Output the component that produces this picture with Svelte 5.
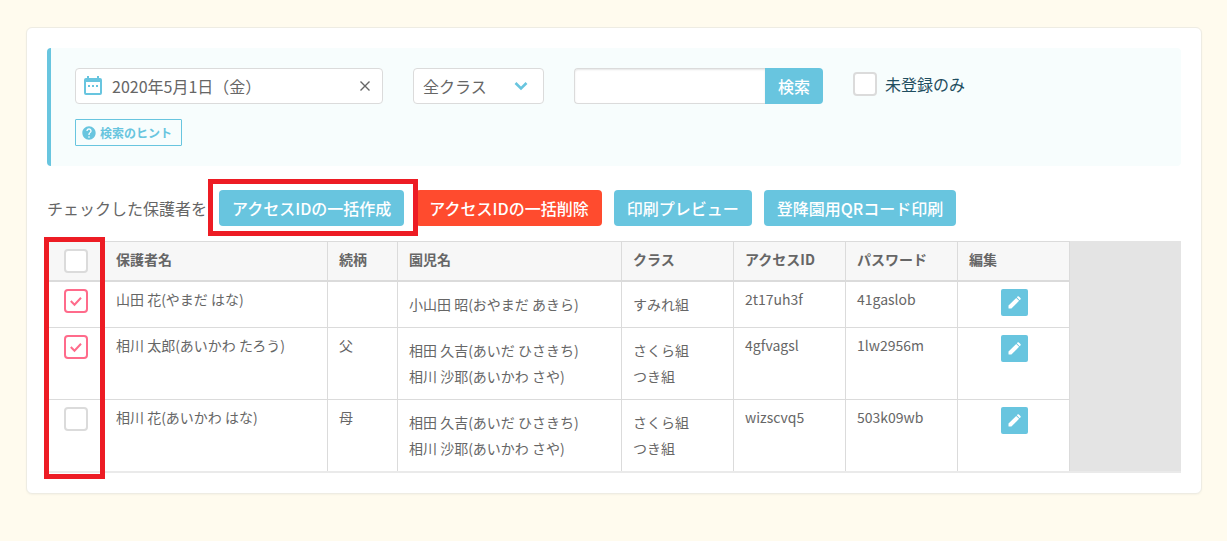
<script>
  let date = "2020年5月1日（金）";
  let className = "all";
  let keyword = "";
  let unregisteredOnly = false;

  const columns = [
    { label: "保護者名", width: 223 },
    { label: "続柄", width: 70 },
    { label: "園児名", width: 224 },
    { label: "クラス", width: 112 },
    { label: "アクセスID", width: 112 },
    { label: "パスワード", width: 112 },
    { label: "編集", width: 112 },
  ];

  let guardians = [
    {
      checked: true,
      name: "山田 花(やまだ はな)",
      relation: "",
      children: ["小山田 昭(おやまだ あきら)"],
      classes: ["すみれ組"],
      accessId: "2t17uh3f",
      password: "41gaslob",
    },
    {
      checked: true,
      name: "相川 太郎(あいかわ たろう)",
      relation: "父",
      children: ["相田 久吉(あいだ ひさきち)", "相川 沙耶(あいかわ さや)"],
      classes: ["さくら組", "つき組"],
      accessId: "4gfvagsl",
      password: "1lw2956m",
    },
    {
      checked: false,
      name: "相川 花(あいかわ はな)",
      relation: "母",
      children: ["相田 久吉(あいだ ひさきち)", "相川 沙耶(あいかわ さや)"],
      classes: ["さくら組", "つき組"],
      accessId: "wizscvq5",
      password: "503k09wb",
    },
  ];

  const toggleAll = (event) => {
    const checked = event.target.checked;
    guardians = guardians.map((guardian) => ({ ...guardian, checked }));
  };
</script>

<main>
  <section class="card">
    <form class="search" on:submit|preventDefault>
      <div class="filters">
        <div class="date">
          <svg width="24" height="24" viewBox="0 0 24 24" aria-hidden="true">
            <path
              fill="currentColor"
              fill-rule="evenodd"
              d="M6 2h2v2h8V2h2v2h1a2 2 0 0 1 2 2v13a2 2 0 0 1-2 2H5a2 2 0 0 1-2-2V6a2 2 0 0 1 2-2h1zM5 8v11h14V8zM7 11h2v2H7zm4 0h2v2h-2zm4 0h2v2h-2z"
            />
          </svg>
          <input type="text" aria-label="日付" bind:value={date} />
          <button type="button" aria-label="クリア" on:click={() => (date = "")}>
            <svg width="10" height="10" viewBox="0 0 10 10" aria-hidden="true">
              <path d="M.5.5l9 9M9.5.5l-9 9" stroke="currentColor" stroke-width="1.4" />
            </svg>
          </button>
        </div>

        <div class="select">
          <select aria-label="クラス" bind:value={className}>
            <option value="all">全クラス</option>
            <option value="sumire">すみれ組</option>
            <option value="sakura">さくら組</option>
            <option value="tsuki">つき組</option>
          </select>
          <svg width="14" height="10" viewBox="0 0 14 10" aria-hidden="true">
            <path d="M1.500 2L7 7.500 12.500 2" fill="none" stroke="currentColor" stroke-width="2.600" />
          </svg>
        </div>

        <div class="keyword">
          <input type="text" aria-label="キーワード" bind:value={keyword} />
          <button type="submit">検索</button>
        </div>

        <label class="unregistered">
          <input class="check" type="checkbox" bind:checked={unregisteredOnly} />
          未登録のみ
        </label>
      </div>

      <button class="hint" type="button">
        <svg width="16" height="16" viewBox="0 0 24 24" aria-hidden="true">
          <path
            fill="currentColor"
            d="M12 2C6.480 2 2 6.480 2 12s4.480 10 10 10 10-4.480 10-10S17.520 2 12 2zm1 17h-2v-2h2v2zm2.070-7.750l-.9.920C13.450 12.900 13 13.500 13 15h-2v-.5c0-1.100.450-2.100 1.170-2.830l1.240-1.260c.370-.360.590-.860.590-1.410 0-1.100-.9-2-2-2s-2 .9-2 2H8c0-2.210 1.790-4 4-4s4 1.790 4 4c0 .880-.360 1.680-.930 2.250z"
          />
        </svg>
        検索のヒント
      </button>
    </form>

    <div class="actions">
      <span>チェックした保護者を</span>
      <div class="marked">
        <button type="button">アクセスIDの一括作成</button>
      </div>
      <button class="danger" type="button">アクセスIDの一括削除</button>
      <button type="button">印刷プレビュー</button>
      <button type="button">登降園用QRコード印刷</button>
    </div>

    <div class="list">
      <table>
        <colgroup>
          <col style="width: 58px" />
          {#each columns as column}
            <col style="width: {column.width}px" />
          {/each}
        </colgroup>
        <thead>
          <tr>
            <th class="pick">
              <input class="check" type="checkbox" aria-label="すべて選択" on:change={toggleAll} />
            </th>
            {#each columns as column}
              <th>{column.label}</th>
            {/each}
          </tr>
        </thead>
        <tbody>
          {#each guardians as guardian}
            <tr>
              <td class="pick">
                <label>
                  <input
                    class="check"
                    type="checkbox"
                    aria-label={guardian.name}
                    bind:checked={guardian.checked}
                  />
                  {#if guardian.checked}
                    <svg width="24" height="24" viewBox="0 0 24 24" aria-hidden="true">
                      <path d="M6.800 12l3.700 3.700 6.500-7" fill="none" stroke="currentColor" stroke-width="2" />
                    </svg>
                  {/if}
                </label>
              </td>
              <td>{guardian.name}</td>
              <td>{guardian.relation}</td>
              <td>
                <ul>
                  {#each guardian.children as child}
                    <li>{child}</li>
                  {/each}
                </ul>
              </td>
              <td>
                <ul>
                  {#each guardian.classes as item}
                    <li>{item}</li>
                  {/each}
                </ul>
              </td>
              <td>{guardian.accessId}</td>
              <td>{guardian.password}</td>
              <td>
                <button class="edit" type="button" aria-label="編集">
                  <svg width="13" height="13" viewBox="0 0 13 13" aria-hidden="true">
                    <path
                      fill="currentColor"
                      d="M.5 9.600L8.200 1.900l2.900 2.900-7.700 7.700H1a.5.5 0 0 1-.5-.5zM8.800 1.300l.7-.7a1 1 0 0 1 1.400 0l1.500 1.500a1 1 0 0 1 0 1.400l-.7.7z"
                    />
                  </svg>
                </button>
              </td>
            </tr>
          {/each}
        </tbody>
      </table>
    </div>
  </section>
</main>

<style>
  :global(body) {
    background-color: #fffbee;
  }

  main {
    padding: 27px 25px 40px 26px;
    color: #666;
    font-family: "Noto Sans CJK JP", sans-serif;
    font-size: 16px;
    line-height: 24px;
  }

  input,
  select,
  button {
    box-sizing: border-box;
    margin: 0;
    font: inherit;
    color: inherit;
  }

  button {
    cursor: pointer;
  }

  .card {
    padding: 20px;
    border: 1px solid #eeece3;
    border-radius: 6px;
    background-color: white;
    box-shadow: 0 1px 2px rgba(0, 0, 0, 0.04);
  }

  .search {
    display: flex;
    flex-direction: column;
    align-items: flex-start;
    gap: 15px;
    padding: 20px 24px;
    border-left: 4px solid #68c5df;
    border-radius: 4px;
    background-color: #f7fdfd;
  }

  .filters {
    display: flex;
    flex-wrap: wrap;
    gap: 30px;
  }

  .date,
  .select {
    display: flex;
    align-items: center;
    box-sizing: border-box;
    height: 36px;
    border: 1px solid #dbdbdb;
    border-radius: 4px;
    background-color: white;
  }

  .date {
    width: 308px;
    padding: 0 12px 0 5px;
  }

  .date > svg {
    flex: none;
    color: #68c5df;
  }

  .date input {
    flex: 1;
    min-width: 0;
    padding: 0 7px;
    border: none;
    background: none;
    outline: none;
  }

  .date button {
    display: flex;
    padding: 0;
    border: none;
    background: none;
  }

  .select {
    position: relative;
  }

  .select select {
    width: 129px;
    height: 34px;
    padding: 0 36px 0 9px;
    border: none;
    background: none;
    appearance: none;
    outline: none;
  }

  .select svg {
    position: absolute;
    right: 15px;
    color: #68c5df;
    pointer-events: none;
  }

  .keyword {
    display: flex;
  }

  .keyword input {
    width: 191px;
    height: 36px;
    padding: 0 10px;
    border: 1px solid #dbdbdb;
    border-right: none;
    border-radius: 4px 0 0 4px;
    background-color: white;
    box-shadow: inset 0 1px 2px rgba(10, 10, 10, 0.1);
    outline: none;
  }

  .keyword button,
  .actions button {
    height: 36px;
    padding: 0 13px;
    border: none;
    border-radius: 4px;
    background-color: #68c5df;
    color: white;
    font-weight: 500;
  }

  .keyword button {
    border-radius: 0 4px 4px 0;
  }

  .unregistered {
    display: flex;
    align-items: center;
    gap: 8px;
    height: 32px;
    color: #1f4e5f;
  }

  .check {
    display: block;
    width: 24px;
    height: 24px;
    border: 2px solid #dbdbdb;
    border-radius: 4px;
    background-color: white;
    appearance: none;
  }

  .check:checked {
    border-color: #ff6b8b;
  }

  .hint {
    display: flex;
    align-items: center;
    gap: 3px;
    height: 27px;
    padding: 0 9px 0 5px;
    border: 1px solid #68c5df;
    border-radius: 1px;
    background: none;
    color: #68c5df;
    font-size: 12px;
    font-weight: 700;
  }

  .actions {
    display: flex;
    flex-wrap: wrap;
    align-items: center;
    gap: 12px;
    margin: 24px 0 15px;
  }

  .actions .danger {
    background-color: #ff4b2e;
  }

  .marked {
    position: relative;
  }

  .marked::after,
  .list::after {
    content: "";
    position: absolute;
    border: 5px solid #ed1c24;
    pointer-events: none;
  }

  .marked::after {
    inset: -11px -14px -10px -11px;
  }

  .list {
    position: relative;
    border-bottom: 2px solid #eaeaea;
    background-color: #e4e4e4;
  }

  .list::after {
    inset: -4px auto -8px -3px;
    width: 51px;
  }

  table {
    width: 1023px;
    border-spacing: 0;
    table-layout: fixed;
    background-color: white;
    font-size: 14px;
    line-height: 21px;
  }

  th,
  td {
    padding: 7px 10px 7px 11px;
    border-right: 1px solid #dbdbdb;
    border-bottom: 1px solid #dbdbdb;
    text-align: left;
    vertical-align: top;
  }

  th {
    border-top: 1px solid #dbdbdb;
    border-bottom-width: 2px;
    background-color: #f7f7f7;
    font-weight: 700;
  }

  tbody tr:last-child td {
    border-bottom: none;
  }

  .pick {
    padding: 7px 10px;
  }

  .pick .check {
    margin: 0 auto;
  }

  .pick label {
    position: relative;
    display: block;
    width: 24px;
    margin: 0 auto;
  }

  .pick svg {
    position: absolute;
    top: 0;
    left: 0;
    color: #ff6b8b;
    pointer-events: none;
  }

  ul {
    margin: 0;
    padding: 2px 0 3px;
    list-style: none;
    line-height: 26px;
  }

  .edit {
    display: flex;
    align-items: center;
    justify-content: center;
    width: 27px;
    height: 27px;
    margin: 0 auto;
    padding: 0;
    border: none;
    border-radius: 2px;
    background-color: #68c5df;
    color: white;
  }
</style>
